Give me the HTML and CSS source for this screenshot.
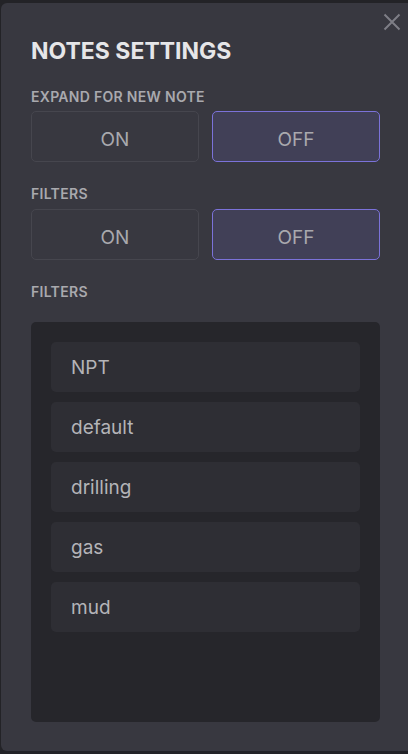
FILE: index.html
```html
<!DOCTYPE html>
<html>
<head>
<meta charset="utf-8">
<link rel="stylesheet" href="styles.css">
</head>
<body>
<div class="panel">
  <button class="close" aria-label="Close">
    <svg width="18" height="18" viewBox="0 0 18 18"><path d="M1.5 1.5 L16.5 16.5 M16.5 1.5 L1.5 16.5" stroke="#7e7e86" stroke-width="2" fill="none"/></svg>
  </button>
  <h1 class="title">NOTES SETTINGS</h1>
  <div class="label">EXPAND FOR NEW NOTE</div>
  <div class="toggle">
    <div class="opt">ON</div>
    <div class="opt active">OFF</div>
  </div>
  <div class="label">FILTERS</div>
  <div class="toggle">
    <div class="opt">ON</div>
    <div class="opt active">OFF</div>
  </div>
  <div class="label list-label">FILTERS</div>
  <div class="list">
    <div class="item">NPT</div>
    <div class="item">default</div>
    <div class="item">drilling</div>
    <div class="item">gas</div>
    <div class="item">mud</div>
  </div>
</div>
</body>
</html>
```
FILE: styles.css
```css
html, body {
  margin: 0;
  padding: 0;
  background: #232327;
  font-family: Inter, "Noto Sans", sans-serif;
  overflow: hidden;
}
.panel {
  position: relative;
  margin: 3px 0 0 1px;
  width: 407px;
  height: 748px;
  box-sizing: border-box;
  padding: 34px 28px 0 30px;
  background: #383840;
  border-radius: 6px 0 0 6px;
  display: flex;
  flex-direction: column;
}
.close {
  position: absolute;
  top: 10px;
  right: 7px;
  padding: 0;
  border: 0;
  background: none;
  width: 18px;
  height: 18px;
}
.close svg { display: block; }
.title {
  margin: 0;
  font-size: 23px;
  line-height: 28px;
  font-weight: 700;
  color: #e6e6e8;
}
.label {
  font-size: 14px;
  line-height: 17px;
  font-weight: 600;
  letter-spacing: 0.3px;
  color: #a9a9ae;
  margin-top: 23px;
  margin-bottom: 7px;
}
.label:first-of-type { margin-bottom: 6px; }
.list-label { margin-bottom: 22px; }
.toggle {
  display: grid;
  grid-template-columns: 1fr 1fr;
  gap: 13px;
}
.opt {
  height: 51px;
  box-sizing: border-box;
  padding-top: 6px;
  border: 1px solid #46464e;
  border-radius: 5px;
  display: flex;
  align-items: center;
  justify-content: center;
  font-size: 19px;
  color: #a9a9ae;
}
.opt.active {
  background: #414057;
  border-color: #7b72d9;
}
.list {
  flex-shrink: 0;
  background: #26262b;
  border-radius: 5px;
  height: 400px;
  box-sizing: border-box;
  padding: 20px;
  display: flex;
  flex-direction: column;
  gap: 10px;
}
.item {
  flex-shrink: 0;
  height: 50px;
  box-sizing: border-box;
  background: #2e2e34;
  border-radius: 5px;
  display: flex;
  align-items: center;
  padding-left: 20px;
  font-size: 19px;
  color: #b4b4b8;
}
```
